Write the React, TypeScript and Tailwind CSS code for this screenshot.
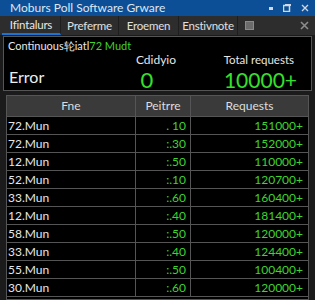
import React from "react";

const rows = [
  ["72.Mun", ". 10", "151000+"],
  ["72.Mun", ":.30", "152000+"],
  ["12.Mun", ":.50", "110000+"],
  ["52.Mun", ":.10", "120700+"],
  ["33.Mun", ":.60", "160400+"],
  ["12.Mun", ":.40", "181400+"],
  ["58.Mun", ":.50", "120000+"],
  ["33.Mun", ":.40", "124400+"],
  ["55.Mun", ":.50", "100400+"],
  ["30.Mun", ":.60", "120000+"],
];

export default function App() {
  return (
    <div className="w-[315px] h-[300px] overflow-hidden bg-[#2b2b2b] font-['Lato',sans-serif] flex flex-col">
      {/* title bar */}
      <div className="h-[16px] bg-[#0d4f97] flex items-center justify-between pl-[10px] pr-[6px] shrink-0">
        <span className="text-[12px] leading-none text-[#dfe6ef]">Moburs Poll Software Grware</span>
        <div className="flex items-center gap-[10px] text-[#cfd8e4]">
          <span className="w-[4px] h-[3px] bg-[#cfd8e4]" />
          <svg width="8" height="8" viewBox="0 0 8 8"><rect x="0.5" y="1.5" width="6" height="6" fill="none" stroke="#cfd8e4" strokeWidth="1.5" /><rect x="2" y="0" width="6" height="2" fill="#cfd8e4" /></svg>
          <svg width="8" height="8" viewBox="0 0 8 8"><path d="M1 1L7 7M7 1L1 7" stroke="#cfd8e4" strokeWidth="1.3" /></svg>
        </div>
      </div>
      {/* tabs */}
      <div className="h-[19px] bg-[#2d2d2d] flex items-stretch shrink-0 pl-[2px] pr-[6px]">
        <div className="w-[59px] flex items-center justify-center text-[11.5px] tracking-[-0.2px] text-[#e8e8e8] border-b-2 border-[#1a73d6] border-r border-r-[#1e1e1e]">Ifintalurs</div>
        <div className="w-[58px] flex items-center justify-center text-[11.5px] tracking-[-0.2px] text-[#e0e0e0] border-r border-[#1e1e1e]">Preferme</div>
        <div className="w-[60px] flex items-center justify-center text-[11.5px] tracking-[-0.2px] text-[#e0e0e0] border-r border-[#1e1e1e]">Eroemen</div>
        <div className="w-[59px] flex items-center justify-center text-[11.5px] tracking-[-0.2px] text-[#e0e0e0] border-r border-[#1e1e1e]">Enstivnote</div>
        <div className="flex items-center pl-[7px]">
          <div className="w-[9px] h-[9px] bg-[#6b6b6b] border border-[#8a8a8a]" />
        </div>
        <div className="flex-1" />
        <div className="flex items-center">
          <svg width="9" height="9" viewBox="0 0 9 9"><path d="M1 1L8 8M8 1L1 8" stroke="#8c8c8c" strokeWidth="1.6" /></svg>
        </div>
      </div>
      {/* content */}
      <div className="flex-1 bg-[#1b1b1b] pl-[3px] pr-[3px] pt-[1px] flex flex-col">
        <div className="h-[55px] bg-black border border-[#555] flex flex-col pl-[4px] pr-[2px] pt-[2px] shrink-0">
          <div className="text-[11px] leading-[14px] text-[#e8e8e8]">
            Continuous轮iatl<span className="text-[#3fd42f]">72 Mudt</span>
          </div>
          <div className="flex flex-1">
            <div className="w-[120px] flex items-end pb-[6px] pl-[1px]">
              <span className="text-[16px] leading-none text-[#eeeeee]">Error</span>
            </div>
            <div className="w-[56px] flex flex-col items-center">
              <span className="text-[12px] leading-[14px] text-[#e6e6e6]">Cdidyio</span>
              <span className="text-[22px] leading-[22px] mt-[2px] text-[#35e02b] -ml-[18px]">0</span>
            </div>
            <div className="flex-1 flex flex-col items-end pr-[15px]">
              <span className="text-[11.5px] leading-[14px] text-[#e6e6e6]">Total requests</span>
              <span className="text-[21px] leading-[22px] mt-[2px] text-[#35e02b] -mr-[3px]">10000+</span>
            </div>
          </div>
        </div>
        <div className="mt-[4px] ml-[3px] mr-[3px] bg-black border border-[#555] flex-1">
          <div className="grid grid-cols-[129px_55px_1fr] h-[21px] bg-[#3a3a3a] border-b border-[#555] text-[12px] text-[#dddddd]">
            <div className="flex items-center justify-center border-r border-[#555]">Fne</div>
            <div className="flex items-center justify-center border-r border-[#555]">Peitrre</div>
            <div className="flex items-center justify-center">Requests</div>
          </div>
          {rows.map((r, i) => (
            <div key={i} className="grid grid-cols-[129px_55px_1fr] h-[18px] border-b border-[#555] text-[12px]">
              <div className="flex items-center pl-[1px] border-r border-[#555] text-[#e6e6e6]">{r[0]}</div>
              <div className="flex items-center justify-end pr-[4px] border-r border-[#555] text-[#3fd42f]">{r[1]}</div>
              <div className="flex items-center justify-end pr-[5px] text-[#3fd42f]">{r[2]}</div>
            </div>
          ))}
        </div>
      </div>
    </div>
  );
}
